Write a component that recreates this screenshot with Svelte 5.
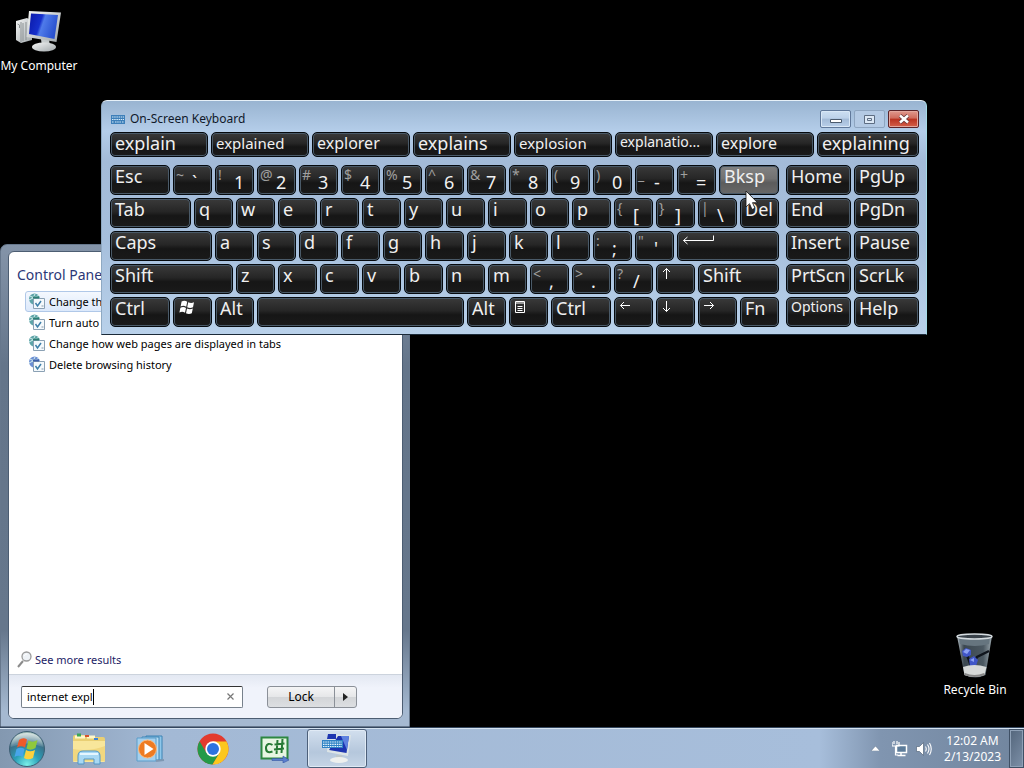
<script lang="ts">
  type Key = { label?: string; shift?: string; icon?: string; span: number; small?: boolean; hot?: boolean };

  const k = (label: string, span = 2): Key => ({ label, span });
  const d = (shift: string, label: string): Key => ({ shift, label, span: 2 });
  const i = (icon: string, span = 2): Key => ({ icon, span });

  const words = [
    { text: 'explain', size: 'lg' },
    { text: 'explained', size: 'sm' },
    { text: 'explorer', size: 'md' },
    { text: 'explains', size: 'lg' },
    { text: 'explosion', size: 'sm' },
    { text: 'explanatio...', size: 'xs' },
    { text: 'explore', size: 'md' },
    { text: 'explaining', size: 'lg' }
  ];

  const mainKeys: Key[] = [
    k('Esc', 3), d('~', '`'), d('!', '1'), d('@', '2'), d('#', '3'), d('$', '4'), d('%', '5'), d('^', '6'),
    d('&', '7'), d('*', '8'), d('(', '9'), d(')', '0'), d('_', '-'), d('+', '='), { label: 'Bksp', span: 3, hot: true },
    k('Tab', 4), ...'qwertyuiop'.split('').map((c) => k(c)), d('{', '['), d('}', ']'), d('|', '\\'), k('Del'),
    k('Caps', 5), ...'asdfghjkl'.split('').map((c) => k(c)), d(':', ';'), d('"', "'"), i('enter', 5),
    k('Shift', 6), ...'zxcvbnm'.split('').map((c) => k(c)), d('<', ','), d('>', '.'), d('?', '/'), i('up'), k('Shift', 4),
    k('Ctrl', 3), i('windows'), k('Alt'), k('', 10), k('Alt'), i('menu'), k('Ctrl', 3), i('left'), i('down'), i('right'), k('Fn')
  ];

  const navKeys: Key[] = [
    k('Home'), k('PgUp'), k('End'), k('PgDn'), k('Insert'), k('Pause'), k('PrtScn'), k('ScrLk'),
    { label: 'Options', span: 2, small: true }, k('Help')
  ];

  const names: Record<string, string> = {
    enter: 'Enter', up: 'Up', windows: 'Windows', menu: 'Menu', left: 'Left', down: 'Down', right: 'Right'
  };

  const results = [
    'Change th',
    'Turn auto',
    'Change how web pages are displayed in tabs',
    'Delete browsing history'
  ];

  let query = $state('internet expl');
</script>

{#snippet keycap(key: Key)}
  <button
    class="key"
    class:dual={key.shift}
    class:small={key.small}
    class:hot={key.hot}
    style:grid-column="span {key.span}"
    aria-label={key.icon ? names[key.icon] : key.label || 'Space'}
  >
    {#if key.shift}
      <span class="upper">{key.shift}</span><span class="lower">{key.label}</span>
    {:else if key.icon === 'windows'}
      <svg class="glyph" width="34" height="16" viewBox="0 0 34 16" fill="#fff">
        <path d="M2.600 1.500q3-1.600 5.600.2l-1 5q-2.700-1.700-5.600-.2zM9.200 2.300q3 1.600 5.800 0l-1 5q-2.900 1.500-5.800 0zM1.400 7.700q2.900-1.500 5.600.2l-1 4.800q-2.700-1.700-5.600-.2zM8 8.500q2.900 1.600 5.800 0l-1 4.800q-2.900 1.600-5.800 0z" />
      </svg>
    {:else if key.icon === 'menu'}
      <svg class="glyph" width="34" height="16" viewBox="0 0 34 16" fill="none" stroke="#fff">
        <path d="M.5 1.500h9v11h-9zM0 3h10M2.500 6.500h5M2.500 8.500h5M2.500 10.500h5" />
      </svg>
    {:else if key.icon}
      <svg class="glyph" width="34" height="16" viewBox="0 0 34 16" fill="none" stroke="#fff">
        {#if key.icon === 'enter'}<path d="M.5 6.500h30V1.500M4.500 3l-4 3.500 4 3.500" />
        {:else if key.icon === 'up'}<path d="M4.500 12V1.500M1 5l3.500-3.500L8 5" />
        {:else if key.icon === 'down'}<path d="M4.500 1v10.500M1 8l3.500 3.500L8 8" />
        {:else if key.icon === 'left'}<path d="M10 5.500H.5M4 2L.5 5.500 4 9" />
        {:else}<path d="M0 5.500h9.500M6 2l3.500 3.500L6 9" />{/if}
      </svg>
    {:else}{key.label}{/if}
  </button>
{/snippet}

<div class="desktop">
  <main class="canvas">
    <a class="shortcut computer" href="#computer">
      <svg width="48" height="46" viewBox="0 0 48 46">
        <defs>
          <linearGradient id="screen" x1="0" y1="0" x2="1" y2="0.3">
            <stop offset="0" stop-color="#0a18a8" /><stop offset=".45" stop-color="#1630cc" /><stop offset=".55" stop-color="#4f7bea" /><stop offset="1" stop-color="#2a52d0" />
          </linearGradient>
          <linearGradient id="metal" x1="0" y1="0" x2="1" y2="1">
            <stop offset="0" stop-color="#f6f7f7" /><stop offset="1" stop-color="#a0a7aa" />
          </linearGradient>
        </defs>
        <path d="M1 15l11-3 5 3v19l-11 3-5-3z" fill="url(#metal)" />
        <path d="M6 16v20M2.500 18l2 1v3M8 17v18M11 16v18" stroke="#8b9193" fill="none" />
        <path d="M26 33h8l1 8h-8z" fill="#c7cccd" />
        <ellipse cx="29" cy="41" rx="12" ry="4.500" fill="url(#metal)" />
        <path d="M14 5l32 1.500-4.500 29.500-30-5z" fill="url(#metal)" />
        <path d="M16 7.500l27 1.500-3.500 24L14 28z" fill="url(#screen)" />
      </svg>
      <span>My Computer</span>
    </a>

    <a class="shortcut bin" href="#bin">
      <svg width="48" height="48" viewBox="0 0 48 48">
        <defs>
          <linearGradient id="glass" x1="0" y1="0" x2="1" y2="0">
            <stop offset="0" stop-color="#aeb9c0" /><stop offset=".2" stop-color="#3b4750" /><stop offset=".75" stop-color="#4b5861" /><stop offset="1" stop-color="#9aa6ad" />
          </linearGradient>
        </defs>
        <path d="M6 4h35l-6.500 39q-10 5-21 0z" fill="url(#glass)" />
        <path d="M8 5h31l-1 7q-14 4-29 0z" fill="#66757f" />
        <path d="M15 20l5 14 6-9 12-6" fill="none" stroke="#10151d" stroke-width="2.500" />
        <path d="M11 19l4-3 5 2v5l-4 2-4-1zM18 27l5-3 4 4-2 6-6 1z" fill="#4056c8" />
        <path d="M12 20l3-3 4 1-3 4zM19 28l4-2v4z" fill="#8ba0f3" />
        <path d="M12 35q11-4 23.500 0l-2 8q-10 4-20 0z" fill="#d6d9d8" />
        <path d="M13.500 42q10 4 20 0" stroke="#888" fill="none" stroke-width="2" />
        <ellipse cx="23.500" cy="4.500" rx="17.500" ry="2.500" fill="#39424a" stroke="#d5dce0" stroke-width="1.500" />
      </svg>
      <span>Recycle Bin</span>
    </a>

    <section class="start-menu">
      <div class="panel">
        <div class="results">
          <h2>Control Pane</h2>
          <ul>
            {#each results as item, n}
              <li>
                <a href="#result" class:selected={n === 0}>
                  <svg width="18" height="17" viewBox="0 0 18 17">
                    <circle cx="6.500" cy="6" r="5.500" fill={n === 3 ? '#6c8fd4' : '#5ea4a8'} />
                    <path d="M2 3q4 3 9-1M1 7q5-1 6-6" stroke="#d6f0ef" fill="none" />
                    <path d="M5.500 5.500h11v10h-11z" fill="#f4f9fc" stroke="#8ba1b4" />
                    <path d="M5 4.500h6" stroke={n === 3 ? '#3d5fa8' : '#2c7e74'} stroke-width="2" />
                    <path d="M7.500 10l2 3 3.500-5" fill="none" stroke="#3e7fa9" stroke-width="1.500" />
                    <path d="M13.500 13h2" stroke="#8298aa" />
                  </svg>
                  <span>{item}</span>
                </a>
              </li>
            {/each}
          </ul>
          <a class="more" href="#more">
            <svg width="16" height="17" viewBox="0 0 16 17">
              <path d="M6 10l-5 6" stroke="#8b8b8b" stroke-width="2" /><circle cx="9.500" cy="5.500" r="4.500" fill="#eef2f6" stroke="#9a9a9a" stroke-width="1.300" />
              <path d="M7 5q1-2 3-2" stroke="#fff" fill="none" />
            </svg>
            <span>See more results</span>
          </a>
        </div>
        <div class="footer">
          <div class="search">
            <input aria-label="Search programs and files" bind:value={query} />
            <button class="clear" aria-label="Clear">
              <svg width="9" height="9" viewBox="0 0 9 9"><path d="M1.500 1.500l6 6M7.500 1.500l-6 6" stroke="#777" stroke-width="1.200" /></svg>
            </button>
          </div>
          <div class="power">
            <button class="lock">Lock</button>
            <button class="arrow" aria-label="More options">
              <svg width="5" height="8" viewBox="0 0 5 8"><path d="M0 0l5 4-5 4z" fill="#222" /></svg>
            </button>
          </div>
        </div>
      </div>
    </section>

    <section class="keyboard">
      <header>
        <svg width="14" height="9" viewBox="0 0 14 9">
          <path d="M0 0h14v9H0z" fill="#3d7fb9" />
          <path d="M1 2h12M1 4.500h12M1 7h2M4 7h6M11 7h2" stroke="#d5ebfa" stroke-width="1.200" stroke-dasharray="1.500 .7" />
        </svg>
        <h1>On-Screen Keyboard</h1>
        <div class="controls">
          <button aria-label="Minimize">
            <svg width="12" height="9" viewBox="0 0 12 9"><path d="M.5 4.500h11v3H.5z" fill="#fff" stroke="#4b5a6d" /></svg>
          </button>
          <button class="disabled" aria-label="Maximize">
            <svg width="11" height="9" viewBox="0 0 11 9"><path d="M.5.5h10v8H.5zM3.500 3.500h4v2h-4z" fill="#dce8f5" stroke="#5d6d82" /></svg>
          </button>
          <button class="close" aria-label="Close">
            <svg width="12" height="10" viewBox="0 0 12 10"><path d="M2 1.500l8 7M10 1.500l-8 7" stroke="#64383b" stroke-width="4" /><path d="M2 1.500l8 7M10 1.500l-8 7" stroke="#fff" stroke-width="2.400" /></svg>
          </button>
        </div>
      </header>
      <div class="words">
        {#each words as w}<button class="key {w.size}">{w.text}</button>{/each}
      </div>
      <div class="blocks">
        <div class="main-block">{#each mainKeys as key}{@render keycap(key)}{/each}</div>
        <div class="nav-block">{#each navKeys as key}{@render keycap(key)}{/each}</div>
      </div>
    </section>

    <svg class="cursor" width="14" height="21" viewBox="0 0 14 21">
      <path d="M1 1v16l3.500-3.300L7 19.500l3-1.300-2.500-5.500h5z" fill="#fff" stroke="#111" stroke-width=".8" />
    </svg>
  </main>

  <footer class="taskbar">
    <button class="orb" aria-label="Start">
      <svg width="40" height="38" viewBox="0 0 40 38">
        <defs>
          <radialGradient id="ball" cx=".5" cy=".95" r=".9">
            <stop offset="0" stop-color="#7af0e8" /><stop offset=".4" stop-color="#2aa0b8" /><stop offset=".75" stop-color="#3b7089" /><stop offset="1" stop-color="#9fbcb8" />
          </radialGradient>
          <linearGradient id="shine" x1="0" y1="0" x2="0" y2="1">
            <stop offset="0" stop-color="#fff" stop-opacity=".6" /><stop offset="1" stop-color="#fff" stop-opacity=".1" />
          </linearGradient>
        </defs>
        <circle cx="20" cy="19" r="17.500" fill="url(#ball)" stroke="#3d5f74" />
        <path d="M4 17Q5 3 20 3t16 14q-16-7-32 0z" fill="url(#shine)" />
        <path d="M12 10q4-3 8-.5l-2 8q-4-2.500-8 0z" fill="#ee5a2a" />
        <path d="M21.500 10.500q4 2.500 9-.5l-2 8q-5 3-9 .5z" fill="#8fc83c" />
        <path d="M9.500 19q4-2.500 8 0l-2 8q-4-2.500-8 0z" fill="#48a5ea" />
        <path d="M19 20q4 2.500 9 0l-2 8q-5 2.500-9 0z" fill="#fcd13c" />
      </svg>
    </button>
    <nav>
      <button aria-label="Windows Explorer">
        <svg width="34" height="32" viewBox="0 0 34 32">
          <path d="M1 4q0-2 2-2h9l2 2h17q2 0 2 2v22H1z" fill="#e9cf74" />
          <path d="M3 4h10M15 4h8" stroke="#fff7c9" stroke-width="3" />
          <path d="M5 2h4" stroke="#3aa655" stroke-width="3" /><path d="M13 3h4" stroke="#d5512e" stroke-width="2" /><path d="M22 6h4" stroke="#3f85d5" stroke-width="2" />
          <path d="M1 8h32v20q0 1-1 1H2q-1 0-1-1z" fill="#f8e69b" />
          <path d="M1 16q16 3 32-3v15H1z" fill="#f1d77e" />
          <path d="M6 31v-8q0-5 5-5h12q5 0 5 5v8h-6v-5H12v5z" fill="#a8d8f3" stroke="#5296c5" />
          <path d="M8 21h18" stroke="#e5f6ff" stroke-width="2" />
        </svg>
      </button>
      <button aria-label="Media Player">
        <svg width="30" height="28" viewBox="0 0 30 28">
          <path d="M10 1h16v24H10z" fill="#8fc7ea" stroke="#3c83b4" /><path d="M6 2h17v23H6z" fill="#b5dcf3" stroke="#3c83b4" /><path d="M1 3h19v23H1z" fill="#a5d0ee" stroke="#5a9dca" />
          <path d="M20 26l8-1" stroke="#7e97b2" stroke-width="2" />
          <circle cx="11.500" cy="14" r="9" fill="#ee7b22" stroke="#f8bb83" /><path d="M8.500 8l9 6-9 6z" fill="#fff" />
        </svg>
      </button>
      <button aria-label="Chrome">
        <svg width="32" height="32" viewBox="0 0 32 32">
          <circle cx="16" cy="16" r="15.500" fill="#e33b2e" />
          <path d="M2.600 8.200A15.500 15.500 0 0 0 15.500 31.500L22.500 20 16 16 9.500 20z" fill="#249a48" />
          <path d="M29.500 8.500A15.500 15.500 0 0 1 15.500 31.500L22.500 20 16 8.500z" fill="#fcc71e" />
          <circle cx="16" cy="16" r="7.700" fill="#fff" /><circle cx="16" cy="16" r="6" fill="#2d73e0" />
        </svg>
      </button>
      <button aria-label="C#">
        <svg width="30" height="28" viewBox="0 0 30 28">
          <path d="M1.500 2.500h26v21h-26z" fill="#e7f6e2" stroke="#2d8741" stroke-width="2" />
          <path d="M12.500 10q-5-3-6.500 2-.5 7 6.500 4.500M17.500 5l-1 14M22.500 4l-1 14M14.500 9.500l10-1M14 14.500l10-1" fill="none" stroke="#277a35" stroke-width="2" />
          <path d="M12 23.500h11v-2.500l6 4-6 3v-2.500H12z" fill="#5b7fd0" stroke="#3455a1" stroke-width=".6" />
        </svg>
      </button>
      <button class="active" aria-label="On-Screen Keyboard">
        <svg width="32" height="31" viewBox="0 0 32 31">
          <path d="M7 1l23 1-3 21-21-4z" fill="#dce4e6" />
          <path d="M7 1h8v5H6zM17 3h11l-2.500 17L8 17z" fill="#1d35b0" /><path d="M20 3h8l-2 14z" fill="#5f82e0" />
          <path d="M15 22h6l1 4h-7z" fill="#bfc8ca" /><ellipse cx="18" cy="27" rx="9" ry="3" fill="#eef0ee" />
          <path d="M1 7h21v8H1z" fill="#2f82c5" /><path d="M2 9h19M2 11.300h19M2 13.500h19" stroke="#e4f4fc" stroke-width="1.200" stroke-dasharray="1.500 .8" />
        </svg>
      </button>
    </nav>
    <div class="tray">
      <svg width="9" height="5" viewBox="0 0 9 5"><path d="M0 5l4.500-5L9 5z" fill="#fff" stroke="#62748c" stroke-width=".5" /></svg>
      <svg width="16" height="16" viewBox="0 0 16 16">
        <path d="M4.500 4.500h10v7h-10z" fill="#5d7c9a" stroke="#fff" stroke-width="1.500" /><path d="M9 12v2.500M5.500 14.500h8" stroke="#fff" stroke-width="1.500" />
        <path d="M0 1v4h7V1M2 0v3M5 0v3M3.500 5v9H6" fill="none" stroke="#fff" stroke-width="1.200" />
      </svg>
      <svg width="16" height="16" viewBox="0 0 16 16" fill="none" stroke="#fff">
        <path d="M.5 5.500h3l4-4v13l-4-4h-3z" fill="#fff" stroke="#55677d" stroke-width=".7" /><path d="M9.500 5.500q1.500 2.500 0 5M11.500 3.500q3 4.500 0 9M13.500 2q3.500 6 0 12" stroke-width="1.100" />
      </svg>
      <time><span>12:02 AM</span><span>2/13/2023</span></time>
    </div>
    <button class="peek" aria-label="Show desktop"></button>
  </footer>
</div>

<style>
  :global(body) {
    margin: 0;
    background: #000;
  }
  .desktop {
    display: flex;
    flex-direction: column;
    height: 100vh;
    overflow: hidden;
    background: #000;
    color: #000;
    font: 12px/16px "Noto Sans", "Open Sans", sans-serif;
  }
  button, input {
    font: inherit;
    padding: 0;
    margin: 0;
    border: 0;
    background: none;
    color: inherit;
  }
  a {
    color: inherit;
    text-decoration: none;
  }
  h1, h2, ul {
    margin: 0;
    padding: 0;
    font-weight: 400;
    list-style: none;
  }
  svg {
    flex: none;
    display: block;
  }
  .canvas {
    position: relative;
    flex: 1;
    min-height: 0;
  }
  .shortcut {
    position: absolute;
    display: flex;
    flex-direction: column;
    align-items: center;
    width: 78px;
    color: #fff;
    white-space: nowrap;
  }
  .computer {
    left: 0;
    top: 6px;
    gap: 6px;
  }
  .bin {
    right: 10px;
    bottom: 30px;
    gap: 2px;
  }

  .start-menu {
    position: absolute;
    left: 0;
    top: 244px;
    bottom: 1px;
    width: 410px;
    box-sizing: border-box;
    display: flex;
    padding: 6px 6px 7px 7px;
    border: 1px solid #66778c;
    border-radius: 7px 7px 0 0;
    background: linear-gradient(#8494a9, #64758a 25%, #66778c 80%, #a5b9d1 97%);
    font-size: 11px;
  }
  .panel {
    flex: 1;
    display: flex;
    flex-direction: column;
    border: 1px solid #4c5d72;
    border-radius: 6px;
    overflow: hidden;
    background: #fff;
  }
  .results {
    flex: 1;
    display: flex;
    flex-direction: column;
    padding: 13px 8px 6px 8px;
  }
  h2 {
    font-size: 14px;
    line-height: 20px;
    color: #2b3777;
    margin-bottom: 6px;
  }
  li a {
    display: flex;
    align-items: center;
    gap: 3px;
    height: 21px;
    margin: 0 0 0 8px;
    padding-left: 2px;
    border: 1px solid transparent;
    border-radius: 3px;
    box-sizing: border-box;
    white-space: nowrap;
  }
  li a.selected {
    border-color: #b0c8e8;
    background: linear-gradient(#f4f8fe, #dce9fb);
  }
  .more {
    display: flex;
    align-items: center;
    gap: 2px;
    margin-top: auto;
    color: #1c1c66;
  }
  .footer {
    display: flex;
    align-items: center;
    gap: 24px;
    height: 43px;
    padding: 0 12px;
    border-top: 1px solid #ccd3dd;
    background: linear-gradient(#e3e8f2, #f0f3fb 30%);
  }
  .search {
    display: flex;
    align-items: center;
    width: 222px;
    height: 22px;
    box-sizing: border-box;
    padding-left: 5px;
    border: 1px solid #77818c;
    border-top-color: #333;
    border-radius: 2px;
    background: #fff;
  }
  .search input {
    field-sizing: content;
    border-right: 1px solid #000;
    outline: 0;
  }
  .clear {
    margin-left: auto;
    padding: 0 7px;
  }
  .power {
    display: flex;
    height: 22px;
    box-sizing: border-box;
    border: 1px solid #8b9098;
    border-radius: 3px;
    background: linear-gradient(#f5f5f6, #e6e7e9 48%, #d3d5d8 52%, #dddfe2);
  }
  .lock {
    width: 66px;
    font-size: 12px;
  }
  .arrow {
    display: grid;
    place-items: center;
    width: 22px;
    border-left: 1px solid #8b9098;
  }

  .keyboard {
    position: absolute;
    left: 101px;
    right: 97px;
    top: 100px;
    box-sizing: border-box;
    padding: 1px 7px 7px 8px;
    border: 1px solid #1b2a38;
    border-top-color: #e6f0f8;
    border-left-color: #8fa9c2;
    border-right-color: #a5dbe6;
    border-radius: 6px 6px 0 0;
    background: linear-gradient(#99b4d1, #b4cde9 30px, #a3bbd8 60px, #a6bfdc 60%, #b9d1ea);
  }
  header {
    display: flex;
    align-items: center;
    gap: 5px;
    height: 30px;
    padding: 4px 0 0 1px;
    box-sizing: border-box;
  }
  h1 {
    font-size: 12px;
    line-height: 16px;
    color: #10192a;
  }
  .controls {
    display: flex;
    gap: 3px;
    margin-left: auto;
  }
  .controls button {
    display: grid;
    place-items: center;
    width: 31px;
    height: 18px;
    border: 1px solid #60789a;
    border-radius: 2px;
    box-sizing: border-box;
    background: linear-gradient(#cddff2, #bcd1e9 45%, #a3bbd7 50%, #b9cfe9);
    box-shadow: inset 0 0 0 1px #d8e7f6;
  }
  .controls .disabled {
    border-color: #8ea5c0;
    background: #b4cae4;
    box-shadow: none;
  }
  .controls .close {
    border-color: #5b2328;
    background: linear-gradient(#e0998e, #cf6b5c 45%, #b8311f 50%, #d4604a);
    box-shadow: inset 0 0 0 1px #e2a69c;
  }
  .words {
    display: grid;
    grid-template-columns: repeat(7, minmax(0, 98fr)) minmax(0, 102fr);
    grid-auto-rows: 25px;
    gap: 3px;
    margin-bottom: 8px;
  }
  .blocks {
    display: grid;
    grid-template-columns: minmax(0, 669fr) minmax(0, 133fr);
    gap: 7px;
  }
  .main-block, .nav-block {
    display: grid;
    grid-auto-rows: 30px;
    gap: 3px;
  }
  .main-block {
    grid-template-columns: repeat(32, minmax(0, 1fr));
  }
  .nav-block {
    grid-template-columns: repeat(4, minmax(0, 1fr));
  }
  .key {
    display: flex;
    align-items: flex-start;
    min-width: 0;
    padding: 0 0 0 4px;
    border: 1px solid #05090d;
    border-radius: 5px;
    box-shadow: inset 0 0 0 1px #4a5a68;
    background: linear-gradient(#3a3a3a, #262626 45%, #161616 60%, #1a1a1a);
    color: #f0f0f0;
    font-size: 18px;
    line-height: 20px;
    white-space: nowrap;
    text-align: left;
  }
  .key.small, .key.xs {
    font-size: 14px;
    line-height: 18px;
  }
  .key.sm {
    font-size: 15px;
  }
  .key.md {
    font-size: 16px;
  }
  .key.hot {
    background: linear-gradient(#828282, #727272 45%, #5c5c5c 60%, #686868);
  }
  .key.dual {
    display: grid;
    grid-template-columns: 16px 1fr;
    padding-left: 2px;
  }
  .upper {
    font-size: 14px;
    line-height: 18px;
    color: #a0a0a0;
  }
  .lower {
    padding-top: 6px;
  }
  .glyph {
    margin: 2px 0 0 1px;
  }
  .cursor {
    position: absolute;
    left: 745px;
    top: 190px;
  }

  .taskbar {
    display: flex;
    height: 40px;
    box-sizing: border-box;
    border-top: 1px solid #d4e2f0;
    background: linear-gradient(90deg, #8398b0, #a3b9d5 16%, #a7bedb 80%, #8095b0 86%, #71859e);
    box-shadow: 0 -1px #33465e;
  }
  .orb {
    width: 59px;
    padding-left: 7px;
  }
  nav {
    display: flex;
    gap: 2px;
  }
  nav button {
    display: grid;
    place-items: center;
    width: 60px;
  }
  nav .active {
    box-sizing: border-box;
    border: 1px solid #4d607a;
    border-radius: 3px;
    background: linear-gradient(#d2dfee, #b5c7dc 60%, #c6d5e6);
    box-shadow: inset 0 0 0 1px #e0eaf5;
  }
  .tray {
    display: flex;
    align-items: center;
    gap: 12px;
    margin-left: auto;
    color: #fff;
  }
  .tray svg + svg + svg {
    margin-left: -4px;
  }
  time {
    display: flex;
    flex-direction: column;
    align-items: center;
  }
  .peek {
    width: 15px;
    margin-left: 8px;
    border: 1px solid #3f5065;
    box-shadow: inset 0 0 0 1px #8ea0b6;
    background: linear-gradient(120deg, #53657b, #7d90a8);
  }
</style>
